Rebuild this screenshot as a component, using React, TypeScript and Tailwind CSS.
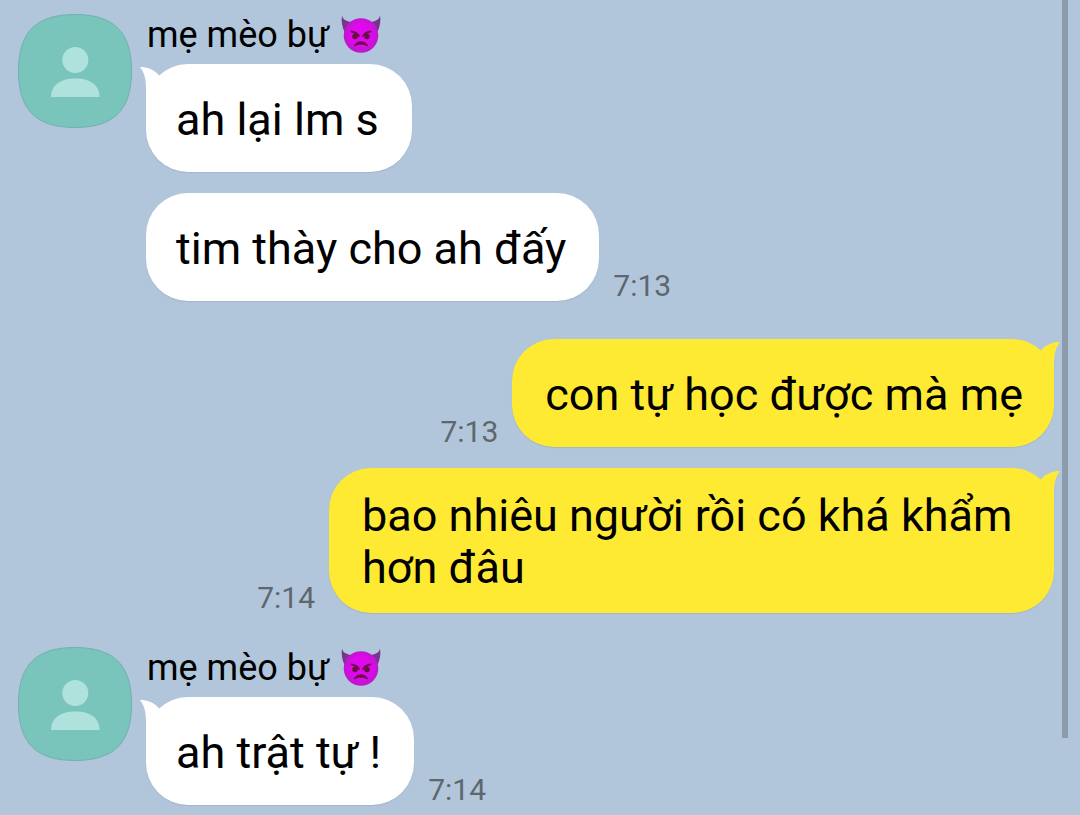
import type { ReactNode } from "react";

function Avatar() {
  return (
    <svg viewBox="0 0 114 114" className="size-[114px] shrink-0" role="img" aria-label="Profile">
      <path
        d="M57 .5C96 .5 113.500 18 113.500 57C113.500 96 96 113.500 57 113.500C18 113.500 .5 96 .5 57C.5 18 18 .5 57 .5Z"
        fill="#79c4bb"
        stroke="#71b0b3"
      />
      <circle cx="57.300" cy="46" r="13" fill="#b0e2dd" />
      <path d="M33 83C33 70 44 64.500 57.300 64.500C71 64.500 81.500 70 81.500 83Z" fill="#b0e2dd" />
    </svg>
  );
}

function DevilIcon() {
  return (
    <svg viewBox="0 1 40 40" className="size-10" role="img" aria-label="Angry devil">
      <defs>
        <radialGradient id="devil-face" cx="50%" cy="48%" r="52%">
          <stop offset="0.6" stopColor="#e008ec" />
          <stop offset="1" stopColor="#b51bc6" />
        </radialGradient>
      </defs>
      <path d="M1 1.500C2 7 7 7 13 9L4 19C1 13 0 7 1 1.500ZM39 1.500C38 7 33 7 27 9L36 19C39 13 40 7 39 1.500Z" fill="#79358c" />
      <circle cx="20" cy="21.500" r="17.300" fill="url(#devil-face)" />
      <path d="M10.500 17.500C13 18 16.500 19.500 18 22M29.500 17.500C27 18 23.500 19.500 22 22" fill="none" stroke="#651044" strokeWidth="1.800" strokeLinecap="round" />
      <circle cx="14" cy="22.500" r="2.800" fill="#651044" />
      <circle cx="26" cy="22.500" r="2.800" fill="#651044" />
      <path d="M13.500 32C14.500 26.500 25.500 26.500 26.500 32C23 29.500 17 29.500 13.500 32Z" fill="#651044" stroke="#651044" strokeLinejoin="round" />
    </svg>
  );
}

function Tail({ mine }: { mine: boolean }) {
  return (
    <svg
      viewBox="0 0 24 44"
      className={
        mine
          ? "absolute top-0 -right-[6px] h-11 w-6 -scale-x-100 text-[#ffea33]"
          : "absolute top-0 -left-[6px] h-11 w-6 text-white"
      }
      aria-hidden="true"
    >
      <path d="M0 3C7 3 14 5.500 19 11.300L22 20V44H6V25C6 15 4.500 9 0 3Z" fill="currentColor" />
    </svg>
  );
}

type MessageProps = { mine?: boolean; tail?: boolean; time?: string; children: ReactNode };

function Message({ mine = false, tail = false, time, children }: MessageProps) {
  return (
    <div className={mine ? "flex flex-row-reverse items-end gap-[14px]" : "flex items-end gap-[14px]"}>
      <div
        className={
          mine
            ? "relative flex min-h-[108px] max-w-[725px] items-center rounded-[42px] bg-[#ffea33] pt-[22px] pr-[31px] pb-[19px] pl-[33px] shadow-[0_1px_1px_#8296a855]"
            : "relative flex min-h-[108px] max-w-[725px] items-center rounded-[42px] bg-white pt-[22px] pr-[33px] pb-[19px] pl-[30px] shadow-[0_1px_1px_#8296a855]"
        }
      >
        {tail && <Tail mine={mine} />}
        <p className="relative text-[45px] leading-[52px]">{children}</p>
      </div>
      {time && <time className="text-[30px] leading-[30px] text-[#60666d]">{time}</time>}
    </div>
  );
}

function IncomingGroup({ children }: { children: ReactNode }) {
  return (
    <section className="flex items-start gap-[14px] pl-[18px]">
      <Avatar />
      <div className="min-w-0 flex-1">
        <h2 className="mb-2 flex h-[42px] items-center gap-3 pl-px text-[36px] leading-[42px]">
          mẹ mèo bự <DevilIcon />
        </h2>
        <div className="flex flex-col gap-[21px]">{children}</div>
      </div>
    </section>
  );
}

export default function App() {
  return (
    <main className="relative min-h-screen bg-[#b1c6db] pt-[14px] pb-[10px] font-['Roboto','Noto_Sans',sans-serif] text-black">
      <IncomingGroup>
        <Message tail>ah lại lm s</Message>
        <Message time="7:13">tim thày cho ah đấy</Message>
      </IncomingGroup>

      <section className="mt-[38px] mb-[34px] flex flex-col gap-[21px] pr-[26px]">
        <Message mine tail time="7:13">con tự học được mà mẹ</Message>
        <Message mine tail time="7:14">bao nhiêu người rồi có khá khẩm hơn đâu</Message>
      </section>

      <IncomingGroup>
        <Message tail time="7:14">ah trật tự !</Message>
      </IncomingGroup>

      <div className="absolute top-0 right-3 h-[738px] w-[6px] bg-[#8c9cad]" aria-hidden="true" />
    </main>
  );
}
